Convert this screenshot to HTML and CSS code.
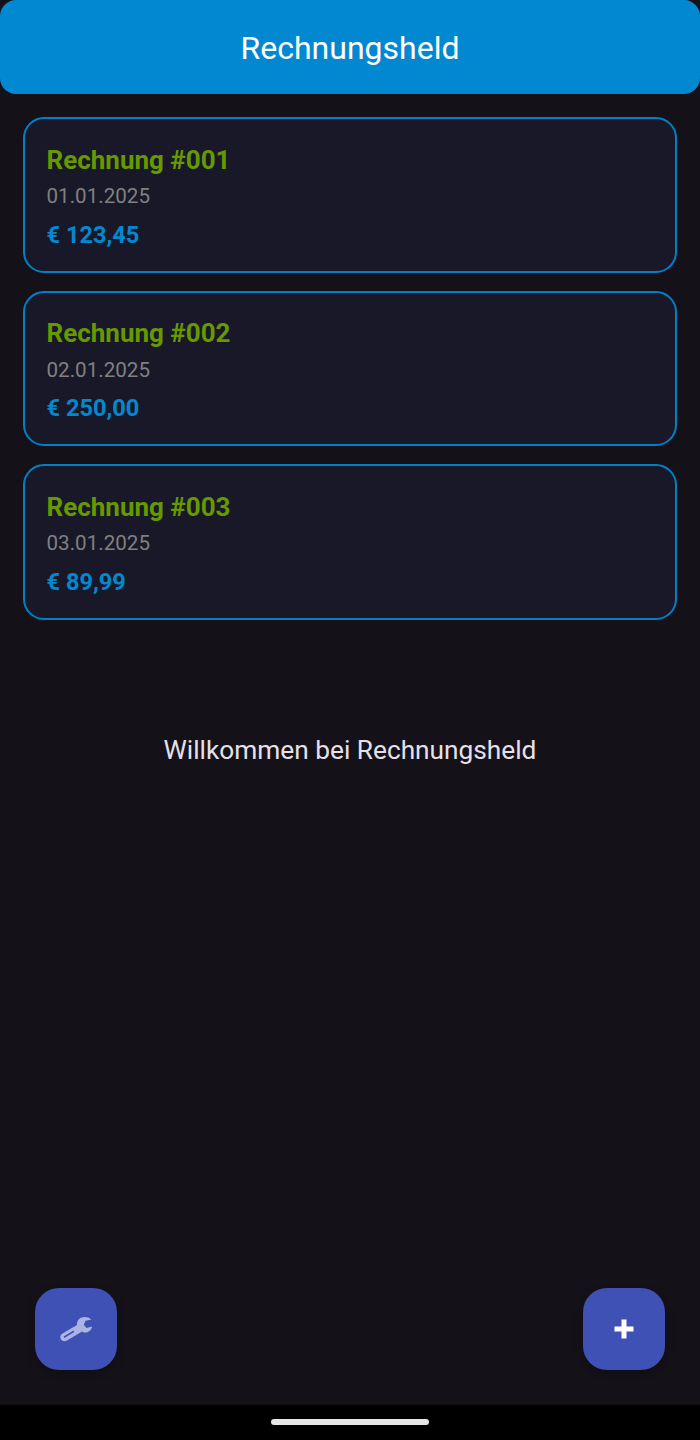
FILE: index.html
```html
<!DOCTYPE html>
<html lang="de">
<head>
    <meta charset="UTF-8">
    <meta name="viewport" content="width=device-width, initial-scale=1.0">
    <title>Rechnungsheld</title>
    <link rel="stylesheet" href="styles.css">
</head>
<body>
    <header class="app-bar">Rechnungsheld</header>

    <main class="invoice-list">
        <div class="invoice-card">
            <div class="invoice-title">Rechnung #001</div>
            <div class="invoice-date">01.01.2025</div>
            <div class="invoice-amount">€ 123,45</div>
        </div>
        <div class="invoice-card">
            <div class="invoice-title">Rechnung #002</div>
            <div class="invoice-date">02.01.2025</div>
            <div class="invoice-amount">€ 250,00</div>
        </div>
        <div class="invoice-card">
            <div class="invoice-title">Rechnung #003</div>
            <div class="invoice-date">03.01.2025</div>
            <div class="invoice-amount">€ 89,99</div>
        </div>
    </main>

    <p class="welcome">Willkommen bei Rechnungsheld</p>

    <div class="actions">
        <button class="fab" aria-label="Einstellungen">
            <svg width="36" height="36" viewBox="0 0 36 36">
                <path fill="#a9b4e2" fill-rule="evenodd" d="M33.5 8.5 L27.5 9.8 L25.8 13.8 L28.5 17 L34 15.5 C33.5 19.5 30 22 26 21.5 C25 21.3 24.5 21 24 20.5 L9 29.5 C6.5 31 3.5 30 2.5 27.5 C1.8 25.5 2.6 23.6 4.5 22.5 L19 14 C18.5 9.5 22 6 26.5 6 C29 6 31.5 6.8 33.5 8.5 Z M5.6 25.6 L15.5 19.6 L16.3 21 L6.4 27 Z"/>
            </svg>
        </button>
        <button class="fab" aria-label="Neue Rechnung">
            <svg width="20" height="20" viewBox="0 0 20 20">
                <path fill="#ffffff" d="M7.5 0.5 H12.5 V7.5 H19.5 V12.5 H12.5 V19.5 H7.5 V12.5 H0.5 V7.5 H7.5 Z"/>
            </svg>
        </button>
    </div>

    <div class="nav-bar">
        <div class="nav-handle"></div>
    </div>
</body>
</html>
```

FILE: styles.css
```css
* {
    box-sizing: border-box;
}

body {
    display: flex;
    flex-direction: column;
    height: 1440px;
    margin: 0;
    background-color: #141218;
    font-family: Roboto, "Liberation Sans", sans-serif;
    overflow: hidden;
}

.app-bar {
    height: 93.5px;
    padding-top: 3px;
    display: flex;
    align-items: center;
    justify-content: center;
    background-color: #0288d1;
    border-radius: 16px;
    color: #ffffff;
    font-size: 32px;
}

.invoice-list {
    display: flex;
    flex-direction: column;
    gap: 18px;
    padding: 23.5px 23px 0;
}

.invoice-card {
    height: 155.7px;
    padding: 22.5px 21.5px 0;
    background-color: #181828;
    border: 2px solid #0280c6;
    border-radius: 21px;
}

.invoice-title {
    color: #669900;
    font-size: 26px;
    font-weight: 700;
    line-height: 36px;
}

.invoice-date {
    margin-top: 0.5px;
    color: #808080;
    font-size: 20.6px;
    line-height: 36px;
}

.invoice-amount {
    margin-top: 2.5px;
    color: #0288d1;
    font-size: 23.6px;
    font-weight: 700;
    line-height: 36px;
}

.welcome {
    margin: 112px 0 0;
    color: #e6e0e9;
    font-size: 26.25px;
    line-height: 36px;
    text-align: center;
}

.actions {
    flex: 1;
    display: flex;
    align-items: flex-end;
    justify-content: space-between;
    padding: 0 35px 35px;
}

.fab {
    width: 82px;
    height: 82px;
    display: flex;
    align-items: center;
    justify-content: center;
    padding: 0;
    background-color: #3f51b5;
    border: none;
    border-radius: 24px;
    box-shadow: 0 3px 8px rgba(0, 0, 0, 0.3);
}

.nav-bar {
    height: 35px;
    display: flex;
    justify-content: center;
    padding-top: 14px;
    background-color: #000000;
}

.nav-handle {
    width: 158px;
    height: 6px;
    background-color: #e6e6e6;
    border-radius: 3px;
}
```
